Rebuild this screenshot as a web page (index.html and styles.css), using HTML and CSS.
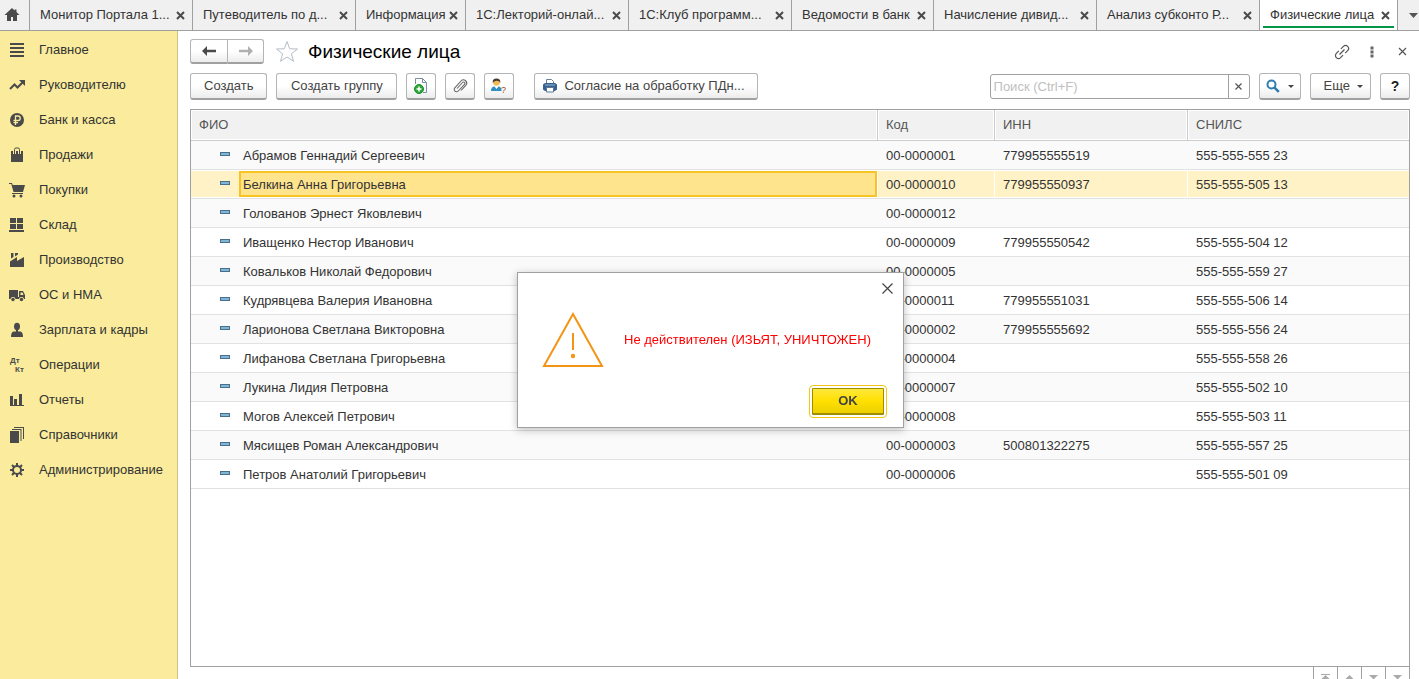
FILE: index.html
```html
<!DOCTYPE html>
<html lang="ru">
<head>
<meta charset="utf-8">
<title>Физические лица</title>
<link rel="stylesheet" href="styles.css">
</head>
<body>
<nav class="tabs" aria-label="Открытые окна">
  <button class="home" aria-label="Начальная страница"><svg width="16" height="14" viewBox="0 0 16 14"><path d="M8 0 0.5 7H3v6h4V9h2v4h4V7h2.500L12.500 4V1.500h-2v1z" fill="#4a4a4a"/></svg></button>
  <div class="tab"><span>Монитор Портала 1...</span><button class="tab-x" aria-label="Закрыть"><svg width="9" height="9" viewBox="0 0 9 9"><path d="M1 1l7 7M8 1l-7 7"/></svg></button></div>
  <div class="tab"><span>Путеводитель по д...</span><button class="tab-x" aria-label="Закрыть"><svg width="9" height="9" viewBox="0 0 9 9"><path d="M1 1l7 7M8 1l-7 7"/></svg></button></div>
  <div class="tab tab-short"><span>Информация</span><button class="tab-x" aria-label="Закрыть"><svg width="9" height="9" viewBox="0 0 9 9"><path d="M1 1l7 7M8 1l-7 7"/></svg></button></div>
  <div class="tab"><span>1С:Лекторий-онлай...</span><button class="tab-x" aria-label="Закрыть"><svg width="9" height="9" viewBox="0 0 9 9"><path d="M1 1l7 7M8 1l-7 7"/></svg></button></div>
  <div class="tab"><span>1С:Клуб программ...</span><button class="tab-x" aria-label="Закрыть"><svg width="9" height="9" viewBox="0 0 9 9"><path d="M1 1l7 7M8 1l-7 7"/></svg></button></div>
  <div class="tab tab-medium"><span>Ведомости в банк</span><button class="tab-x" aria-label="Закрыть"><svg width="9" height="9" viewBox="0 0 9 9"><path d="M1 1l7 7M8 1l-7 7"/></svg></button></div>
  <div class="tab"><span>Начисление дивид...</span><button class="tab-x" aria-label="Закрыть"><svg width="9" height="9" viewBox="0 0 9 9"><path d="M1 1l7 7M8 1l-7 7"/></svg></button></div>
  <div class="tab"><span>Анализ субконто Р...</span><button class="tab-x" aria-label="Закрыть"><svg width="9" height="9" viewBox="0 0 9 9"><path d="M1 1l7 7M8 1l-7 7"/></svg></button></div>
  <div class="tab tab-active"><span>Физические лица</span><button class="tab-x" aria-label="Закрыть"><svg width="9" height="9" viewBox="0 0 9 9"><path d="M1 1l7 7M8 1l-7 7"/></svg></button></div>
  <button class="tabs-more" aria-label="Все окна"><svg width="9" height="5" viewBox="0 0 9 5"><path d="M0 0h9L4.500 5z" fill="#555"/></svg></button>
</nav>

<div class="workspace">
  <nav class="sidebar" aria-label="Разделы">
    <a href="#"><svg width="16" height="16" viewBox="0 0 16 16"><path d="M1 1h14v2H1zM1 5h14v2H1zM1 9h14v2H1zM1 13h14v2H1z"/></svg>Главное</a>
    <a href="#"><svg width="16" height="16" viewBox="0 0 16 16"><path d="M1 12l4.500-4.500 3 3L14 5" fill="none" stroke="#4a4a4a" stroke-width="2"/><path d="M10 3h6v6z"/></svg>Руководителю</a>
    <a href="#"><svg width="16" height="16" viewBox="0 0 16 16"><circle cx="8" cy="8" r="7"/><path d="M6.500 13V4h2.500a2.200 2.200 0 0 1 0 4.500H4.500M4.500 10.700H9" fill="none" stroke="#faec9c" stroke-width="1.300"/></svg>Банк и касса</a>
    <a href="#"><svg width="16" height="16" viewBox="0 0 16 16"><path d="M2 4h12v11H2z"/><path d="M5.500 7V2.500a1.500 1.500 0 0 1 1.500-1.500h2A1.500 1.500 0 0 1 10.500 2.500V7" fill="none" stroke="#faec9c" stroke-width="3"/><path d="M7 3h2v1H7z" fill="#faec9c"/><path d="M5.500 7V2.500a1.500 1.500 0 0 1 1.500-1.500h2A1.500 1.500 0 0 1 10.500 2.500V7" fill="none" stroke="#4a4a4a"/></svg>Продажи</a>
    <a href="#"><svg width="16" height="16" viewBox="0 0 16 16"><path d="M0 1h3l.7 2H16l-2 7H4.500L2.300 2H0zM3 11h11v1H3z"/><circle cx="5" cy="14" r="1.500"/><circle cx="12" cy="14" r="1.500"/></svg>Покупки</a>
    <a href="#"><svg width="16" height="16" viewBox="0 0 16 16"><path d="M1 1h6v5H1zM8 1h6v5H8zM1 7h6v5H1zM8 7h6v5H8zM0 13h15v2H0z"/></svg>Склад</a>
    <a href="#"><svg width="16" height="16" viewBox="0 0 16 16"><path d="M1 15V9.500L8 5v4l7-4v10zM2 1h2.500v4L2 6.500zM6 1h3v1.500L6 4.500z"/></svg>Производство</a>
    <a href="#"><svg width="16" height="16" viewBox="0 0 16 16"><path d="M0 3h9v9H0zM9 10h1v2H9zM10 4h4l2 4v4h-6z"/><path d="M11.500 5.500h2l1 2.500h-3z" fill="#faec9c"/><circle cx="4" cy="12.500" r="2.500" fill="#faec9c"/><circle cx="12.500" cy="12.500" r="2.500" fill="#faec9c"/><circle cx="4" cy="12.500" r="1.700"/><circle cx="12.500" cy="12.500" r="1.700"/></svg>ОС и НМА</a>
    <a href="#"><svg width="16" height="16" viewBox="0 0 16 16"><ellipse cx="8" cy="4.500" rx="3" ry="3.700"/><path d="M7 7h2v2.500h2.500Q14 10 14 15H2q0-5 2.500-5.500H7z"/></svg>Зарплата и кадры</a>
    <a href="#"><svg width="16" height="16" viewBox="0 0 16 16" class="dtkt"><text x="1" y="6">Дт</text><text x="6" y="15">Кт</text></svg>Операции</a>
    <a href="#"><svg width="16" height="16" viewBox="0 0 16 16"><path d="M1 13V4h3v9h1V7h3v6h2V2h3v11h2v1H1z"/></svg>Отчеты</a>
    <a href="#"><svg width="16" height="16" viewBox="0 0 16 16"><path d="M1 4h9v12H1zM3 2h9.500v12h-1V3H3zM5 0h10v12h-1V1H5z"/></svg>Справочники</a>
    <a href="#"><svg width="16" height="16" viewBox="0 0 16 16"><circle cx="8" cy="8" r="4" fill="none" stroke="#4a4a4a" stroke-width="2"/><path d="M8 1v3M8 12v3M1 8h3M12 8h3M3 3l2.200 2.200M10.800 10.800L13 13M13 3l-2.200 2.200M5.200 10.800L3 13" stroke="#4a4a4a" stroke-width="2"/></svg>Администрирование</a>
  </nav>

  <main class="form">
    <header class="form-head">
      <div class="history">
        <button class="btn" aria-label="Назад"><svg width="16" height="10" viewBox="0 0 16 10"><path d="M1 5l5-5v3.700h9v2.600H6V10z" fill="#4a4a4a"/></svg></button>
        <button class="btn" aria-label="Вперед"><svg width="16" height="10" viewBox="0 0 16 10"><path d="M15 5l-5-5v3.700H1v2.600h9V10z" fill="#b0b0b0"/></svg></button>
      </div>
      <button class="plain" aria-label="В избранное"><svg width="24" height="23" viewBox="0 0 24 23"><path d="M12 1.500l2.700 7.300 7.800.2-6.100 4.800 2.100 7.500L12 17l-6.500 4.300 2.100-7.500L1.500 9l7.800-.2z" fill="#fff" stroke="#b4bcc6"/></svg></button>
      <h1>Физические лица</h1>
      <div class="window-tools">
        <button class="plain" aria-label="Получить ссылку"><svg width="16" height="16" viewBox="0 0 16 16"><g fill="none" stroke="#555" stroke-width="1.200" transform="rotate(-45 8 8)"><path d="M6.500 5H3a3 3 0 0 0 0 6h3.500M9.500 5H13a3 3 0 0 1 0 6H9.500M4.500 8h7"/></g></svg></button>
        <button class="plain" aria-label="Меню"><svg width="4" height="12" viewBox="0 0 4 12"><path d="M.5.500h3v3h-3zM.5 4.500h3v3h-3zM.5 8.500h3v3h-3z" fill="#666"/></svg></button>
        <button class="plain" aria-label="Закрыть форму"><svg width="9" height="9" viewBox="0 0 9 9"><path d="M1 1l7 7M8 1l-7 7" stroke="#555" stroke-width="1.200"/></svg></button>
      </div>
    </header>

    <div class="toolbar">
      <button class="btn">Создать</button>
      <button class="btn btn-group">Создать группу</button>
      <button class="btn btn-icon" aria-label="Скопировать"><svg width="16" height="16" viewBox="0 0 16 16"><path d="M2.500 6V.500h7l4 4v10H10M9.500.500v4h4" fill="none" stroke="#7c8ea0"/><circle cx="6" cy="11" r="4.500" fill="#2fa83a" stroke="#1b8a2a"/><path d="M6 8.500v5M3.500 11h5" stroke="#fff" stroke-width="1.500"/></svg></button>
      <button class="btn btn-icon" aria-label="Файлы"><svg width="16" height="16" viewBox="0 0 16 16"><path d="M5 10.500l5.500-6a1.300 1.300 0 0 1 2 1.800L6.300 13a2.300 2.300 0 0 1-3.500-3.200L9 3a3.200 3.200 0 0 1 4.800 4.300L9 12.500" fill="none" stroke="#666" stroke-width="1.100"/></svg></button>
      <button class="btn btn-icon" aria-label="Сведения о лице"><svg width="17" height="16" viewBox="0 0 17 16"><circle cx="5.500" cy="4.500" r="3.300" fill="#f0ba55"/><path d="M1.800 5Q1 .500 5.500.500T9.200 5Q8.500 2.500 5.500 2.700T1.800 5z" fill="#4b3a2c"/><path d="M0 13q0-4.500 3.500-4.500L5.500 11l2-2.500q3 0 3 4.500z" fill="#2f8fc4"/><text x="10" y="15" class="mark">?</text></svg></button>
      <button class="btn btn-print"><svg width="16" height="16" viewBox="0 0 16 16"><path d="M4.500 5V1.500h5l2 2V5" fill="#fff" stroke="#6c8096"/><path d="M3 5h10l2 1.500v5L13 13H3l-2-1.500v-5z" fill="#346190"/><path d="M3 7h10" stroke="#9db8d0"/><path d="M4.500 9.500h7v4.500h-7z" fill="#fff" stroke="#5d7690"/></svg>Согласие на обработку ПДн...</button>
      <div class="search">
        <input type="text" placeholder="Поиск (Ctrl+F)" aria-label="Поиск">
        <button aria-label="Очистить"><svg width="7" height="7" viewBox="0 0 7 7"><path d="M.5.500l6 6M6.500.500l-6 6" stroke="#555" stroke-width="1.200"/></svg></button>
      </div>
      <button class="btn btn-find" aria-label="Найти"><svg width="14" height="14" viewBox="0 0 14 14"><circle cx="5.500" cy="5.500" r="4" fill="none" stroke="#2e7cb0" stroke-width="2"/><path d="M8.300 8.300l4.500 4.500" stroke="#2e7cb0" stroke-width="2.600"/></svg><svg width="6" height="3" viewBox="0 0 6 3"><path d="M0 0h6L3 3z" fill="#444"/></svg></button>
      <button class="btn btn-more">Еще<svg width="6" height="3" viewBox="0 0 6 3"><path d="M0 0h6L3 3z" fill="#444"/></svg></button>
      <button class="btn btn-icon btn-help">?</button>
    </div>

    <div class="list">
      <table>
        <colgroup><col><col class="col-code"><col class="col-inn"><col class="col-snils"></colgroup>
        <thead><tr><th>ФИО</th><th>Код</th><th>ИНН</th><th>СНИЛС</th></tr></thead>
        <tbody>
          <tr><td><span class="name">Абрамов Геннадий Сергеевич</span></td><td>00-0000001</td><td>779955555519</td><td>555-555-555 23</td></tr>
          <tr class="selected"><td><span class="name">Белкина Анна Григорьевна</span></td><td>00-0000010</td><td>779955550937</td><td>555-555-505 13</td></tr>
          <tr><td><span class="name">Голованов Эрнест Яковлевич</span></td><td>00-0000012</td><td></td><td></td></tr>
          <tr><td><span class="name">Иващенко Нестор Иванович</span></td><td>00-0000009</td><td>779955550542</td><td>555-555-504 12</td></tr>
          <tr><td><span class="name">Ковальков Николай Федорович</span></td><td>00-0000005</td><td></td><td>555-555-559 27</td></tr>
          <tr><td><span class="name">Кудрявцева Валерия Ивановна</span></td><td>00-0000011</td><td>779955551031</td><td>555-555-506 14</td></tr>
          <tr><td><span class="name">Ларионова Светлана Викторовна</span></td><td>00-0000002</td><td>779955555692</td><td>555-555-556 24</td></tr>
          <tr><td><span class="name">Лифанова Светлана Григорьевна</span></td><td>00-0000004</td><td></td><td>555-555-558 26</td></tr>
          <tr><td><span class="name">Лукина Лидия Петровна</span></td><td>00-0000007</td><td></td><td>555-555-502 10</td></tr>
          <tr><td><span class="name">Могов Алексей Петрович</span></td><td>00-0000008</td><td></td><td>555-555-503 11</td></tr>
          <tr><td><span class="name">Мясищев Роман Александрович</span></td><td>00-0000003</td><td>500801322275</td><td>555-555-557 25</td></tr>
          <tr><td><span class="name">Петров Анатолий Григорьевич</span></td><td>00-0000006</td><td></td><td>555-555-501 09</td></tr>
        </tbody>
      </table>
    </div>
    <div class="pager">
      <button aria-label="В начало"><svg width="9" height="7" viewBox="0 0 9 7"><path d="M0 0h9v1H0zM4.500 1L9 5.500H0z"/></svg></button>
      <button aria-label="Вверх"><svg width="9" height="7" viewBox="0 0 9 7"><path d="M4.500 1L9 5.500H0z"/></svg></button>
      <button aria-label="Вниз"><svg width="9" height="7" viewBox="0 0 9 7"><path d="M0 1h9L4.500 5.500z"/></svg></button>
      <button aria-label="В конец"><svg width="9" height="7" viewBox="0 0 9 7"><path d="M0 1h9L4.500 5.500z"/></svg></button>
    </div>
  </main>
</div>

<div class="overlay">
  <div class="dialog" role="alertdialog" aria-labelledby="message">
    <button class="dialog-x" aria-label="Закрыть"><svg width="11" height="11" viewBox="0 0 11 11"><path d="M.5.500l10 10M10.500.500l-10 10" stroke="#444" stroke-width="1.200"/></svg></button>
    <div class="dialog-body">
      <svg width="62" height="56" viewBox="0 0 62 56"><path d="M31 2L60 54H2z" fill="none" stroke="#f39414" stroke-width="2"/><path d="M31 21v17" stroke="#f39414" stroke-width="2"/><circle cx="31" cy="44" r="2.200" fill="#f39414"/></svg>
      <p id="message">Не действителен (ИЗЬЯТ, УНИЧТОЖЕН)</p>
    </div>
    <button class="ok">OK</button>
  </div>
</div>
</body>
</html>
```
FILE: styles.css
```css
*, *::before { box-sizing: border-box; }

body {
  margin: 0;
  height: 100vh;
  display: flex;
  flex-direction: column;
  overflow: hidden;
  background: #fff;
  color: #333;
  font: 13px/16px "Liberation Sans", Arial, sans-serif;
}

button, input { font: inherit; color: inherit; }
button { padding: 0; border: 0; background: none; }
svg { display: block; flex: none; }

/* Window tabs */
.tabs {
  flex: none;
  display: flex;
  height: 31px;
  background: #f0f0f0;
  border-bottom: 1px solid #a0a0a0;
}
.home {
  flex: none;
  width: 30px;
  padding-right: 6px;
  display: flex;
  align-items: center;
  justify-content: center;
  border-right: 1px solid #a0a0a0;
}
.tab {
  flex: 0 1 163px;
  display: flex;
  align-items: center;
  justify-content: space-between;
  padding: 0 7px 0 10px;
  border-right: 1px solid #a0a0a0;
  white-space: nowrap;
}
.tab-short { flex-basis: 110px; }
.tab-medium { flex-basis: 142px; }
.tab-active {
  flex-basis: 138px;
  background: linear-gradient(#009646, #009646) center 26px / calc(100% - 6px) 2px no-repeat #fff;
}
.tab-x path { stroke: #4a4a4a; stroke-width: 2; }
.tabs-more {
  flex: 1;
  display: flex;
  align-items: center;
  padding-left: 11px;
}

.workspace { flex: 1; min-height: 0; display: flex; }

/* Sections */
.sidebar {
  flex: none;
  width: 178px;
  padding-top: 1px;
  background: #faec9c;
  border-right: 1px solid #ccc083;
}
.sidebar a {
  display: flex;
  align-items: center;
  gap: 14px;
  height: 35px;
  padding-left: 9px;
  color: #333;
  text-decoration: none;
  white-space: nowrap;
}
.sidebar svg { fill: #4a4a4a; }
.dtkt text { font: bold 8px "Liberation Sans", sans-serif; }

/* Form */
.form {
  flex: 1;
  min-width: 0;
  display: flex;
  flex-direction: column;
  padding: 8px 9px 0 12px;
}
.form-head { display: flex; align-items: center; height: 25px; }
.form-head h1 {
  margin: 0 0 0 9px;
  font-size: 19px;
  line-height: 24px;
  font-weight: normal;
  color: #000;
}
.history { display: flex; margin-right: 11px; }
.history .btn { width: 36px; height: 25px; padding: 0; }
.history .btn:first-child { width: 38px; border-radius: 3px 0 0 3px; }
.history .btn:last-child { border-left: 0; border-radius: 0 3px 3px 0; }
.window-tools {
  display: flex;
  margin-left: auto;
  margin-right: -7px;
}
.plain {
  display: flex;
  align-items: center;
  justify-content: center;
}
.window-tools .plain { width: 30px; height: 24px; }

.btn {
  flex: none;
  display: flex;
  align-items: center;
  justify-content: center;
  height: 27px;
  padding: 0 13px;
  border: 1px solid #b4b4b4;
  border-bottom: 2px solid #a0a0a0;
  border-radius: 3px;
  background: linear-gradient(#fff 50%, #ececec);
  color: #444;
  white-space: nowrap;
}
.toolbar { display: flex; gap: 9px; margin: 9px 0; }
.btn-group { width: 121px; padding: 0; }
.btn-icon { width: 30px; padding: 0; }
.btn-print { gap: 6px; margin-left: 11px; padding: 0 12px 0 7px; }
.btn-find { gap: 8px; padding: 0 6px; }
.btn-more { gap: 7px; padding: 0 7px 0 13px; }
.btn-help { font-size: 14px; font-weight: bold; color: #222; }
.mark { font: 9px "Liberation Sans", sans-serif; fill: #a04a20; }

.search {
  display: flex;
  width: 260px;
  height: 25px;
  margin: 1px 0 0 auto;
  border: 1px solid #a0a0a0;
  border-radius: 3px;
}
.search input {
  flex: 1;
  min-width: 0;
  padding: 0 3px;
  border: 0;
  background: none;
}
.search input::placeholder { color: #c0c0c0; opacity: 1; }
.search button {
  width: 21px;
  display: flex;
  align-items: center;
  justify-content: center;
  border-left: 1px solid #a0a0a0;
}

/* List */
.list {
  flex: 1;
  min-height: 0;
  overflow: hidden;
  border: 1px solid #a0a0a0;
}
table {
  width: 100%;
  table-layout: fixed;
  border-collapse: separate;
  border-spacing: 0;
}
.col-code { width: 117px; }
.col-inn { width: 193px; }
.col-snils { width: 222px; }
th {
  height: 31px;
  padding: 0 8px;
  text-align: left;
  font-weight: normal;
  color: #555;
  background: #f1f1f1;
  border-bottom: 1px solid #ccc;
  box-shadow: inset 0 0 0 1px #fff;
}
th + th { border-left: 1px solid #ccc; }
td {
  height: 29px;
  padding: 2px 8px 0 9px;
  border-bottom: 1px solid #e2e2e2;
}
td:first-child { padding: 2px 0 0 29px; }
tbody tr:nth-child(odd) { background: #fafafa; }
.name {
  display: flex;
  align-items: center;
  gap: 13px;
}
.name::before {
  content: "";
  width: 10px;
  height: 4px;
  margin-bottom: 4px;
  border: 1px solid #47708c;
  background: #82b4d4;
}
tr.selected td {
  background: linear-gradient(#fff2c6, #fff2c6) 1px 1px / 100% 26px no-repeat;
}
tr.selected td:first-child {
  background:
    linear-gradient(#ffe48e, #ffe48e) 50px 3px / calc(100% - 52px) 22px no-repeat,
    linear-gradient(#f8c425, #f8c425) 48px 1px / calc(100% - 48px) 26px no-repeat,
    linear-gradient(#fff2c6, #fff2c6) 0 1px / 100% 26px no-repeat;
}

.pager {
  flex: none;
  height: 12px;
  display: flex;
  justify-content: flex-end;
  overflow: hidden;
  border-right: 1px solid #a0a0a0;
}
.pager button {
  display: flex;
  justify-content: center;
  width: 24px;
  height: 24px;
  padding-top: 7px;
  border-left: 1px solid #a0a0a0;
}
.pager svg { fill: #aaa; }

/* Message */
.overlay {
  position: fixed;
  inset: 0;
  display: flex;
  align-items: center;
  justify-content: center;
  padding: 21px 0 0 2px;
}
.dialog {
  display: flex;
  flex-direction: column;
  width: 387px;
  padding: 10px 16px 9px 24px;
  border: 1px solid #a0a0a0;
  background: #fff;
  box-shadow: 0 2px 8px rgba(0, 0, 0, .25);
}
.dialog-x { align-self: flex-end; margin-right: -6px; }
.dialog-body {
  display: flex;
  align-items: center;
  gap: 20px;
  margin: 18px 0 17px;
}
.dialog-body p { margin: 0; color: #f00; white-space: nowrap; }
.ok {
  align-self: flex-end;
  width: 72px;
  height: 27px;
  margin: 3px;
  border: 1px solid #a08c00;
  border-bottom-width: 2px;
  border-radius: 1px;
  outline: 1px solid #f5c518;
  outline-offset: 2px;
  background: linear-gradient(#ffe83c, #ffe000 50%, #ecd000);
  font-weight: bold;
  color: #444;
}
```
